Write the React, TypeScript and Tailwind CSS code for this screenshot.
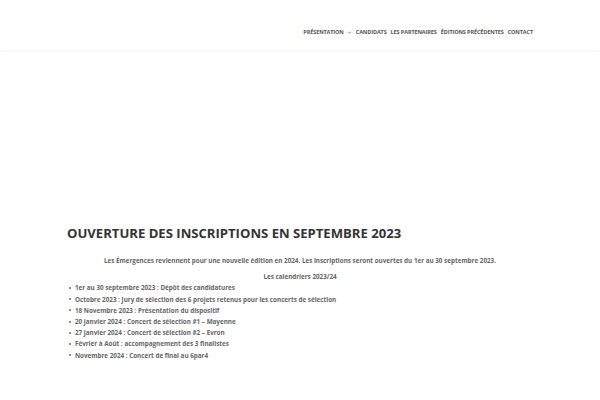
const navItems = ['Présentation', 'Candidats', 'Les partenaires', 'Éditions précédentes', 'Contact'];

const calendar = [
  ['1er au 30 septembre 2023', 'Dépôt des candidatures'],
  ['Octobre 2023', 'Jury de sélection des 6 projets retenus pour les concerts de sélection'],
  ['18 Novembre 2023', 'Présentation du dispositif'],
  ['20 janvier 2024', 'Concert de sélection #1 – Mayenne'],
  ['27 janvier 2024', 'Concert de sélection #2 – Evron'],
  ['Février à Août', 'accompagnement des 3 finalistes'],
  ['Novembre 2024', 'Concert de final au 6par4'],
];

export default function App() {
  return (
    <div
      className="w-[600px] h-[400px] overflow-hidden bg-white text-[#666]"
      style={{ fontFamily: '"Open Sans", sans-serif' }}
    >
      <header className="h-[50px] bg-white shadow-[0_1px_3px_rgba(0,0,0,0.06)] flex items-start justify-end pr-[67px] pt-[28px]">
        <nav className="flex items-center gap-[4px] text-[5.5px] leading-[8px] font-bold uppercase text-[#555] tracking-[-0.1px]">
          {navItems.map((item, i) => (
            <span key={item} className="flex items-center gap-[3px]">
              {item}
              {i === 0 && (
                <svg width="5" height="5" viewBox="0 0 10 10">
                  <path d="M2 3.5 L5 6.5 L8 3.5" fill="none" stroke="#666" strokeWidth="1.4" />
                </svg>
              )}
            </span>
          ))}
        </nav>
      </header>

      <main className="w-[466px] mx-auto pt-[174px]">
        <h1 className="text-[13.1px] leading-[18px] font-bold uppercase text-[#333]">
          Ouverture des inscriptions en septembre 2023
        </h1>
        <div className="text-[6.3px] font-bold leading-[11.2px] mt-[13px]">
          <p className="text-center">
            Les Émergences reviennent pour une nouvelle édition en 2024. Les inscriptions seront ouvertes du 1er au 30 septembre 2023.
          </p>
          <p className="text-center mt-[5px]">Les calendriers 2023/24</p>
          <ul>
            {calendar.map(([date, label]) => (
              <li key={date} className="flex items-center">
                <span className="w-[2px] h-[2px] rounded-full bg-[#666] ml-[2px] mr-[4px]" />
                {date} : {label}
              </li>
            ))}
          </ul>
        </div>
      </main>
    </div>
  );
}
